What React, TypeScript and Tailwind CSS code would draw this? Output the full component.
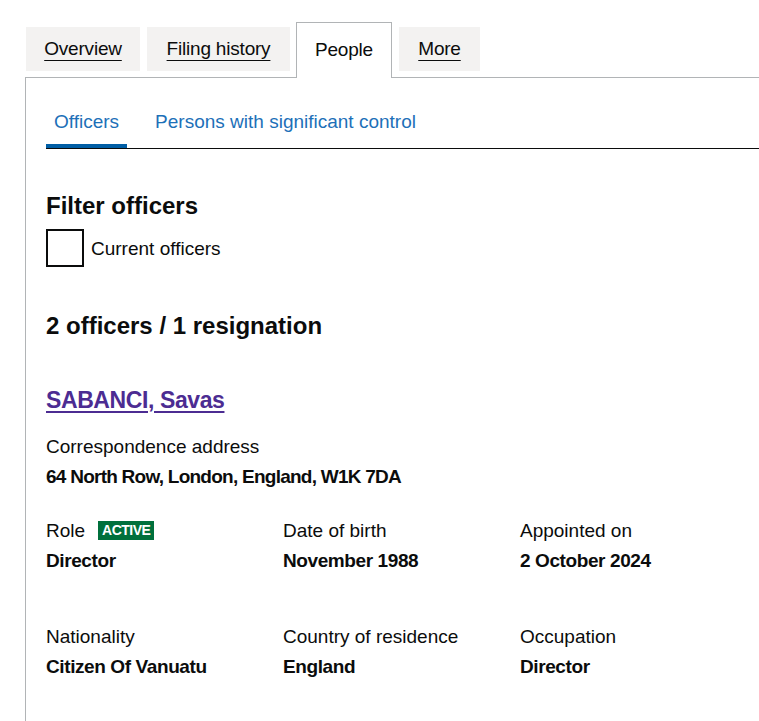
const body = { fontFamily: '"Liberation Sans", Arial, sans-serif' };

const tabs = [
  { label: "Overview", active: false, cls: "w-[114px] mr-[7px]" },
  { label: "Filing history", active: false, cls: "w-[143px] mr-[6px]" },
  { label: "People", active: true, cls: "w-[96px] mr-[7px]" },
  { label: "More", active: false, cls: "w-[81px]" },
];

function Field({ label, value, badge }: { label: string; value: string; badge?: string }) {
  return (
    <div>
      <div className="flex items-center text-[19px] leading-[25px]">
        <span>{label}</span>
        {badge && (
          <span className="ml-[13px] bg-[#00703c] px-[4px] text-[14px] font-bold leading-[19px] tracking-[-0.5px] text-white">
            {badge}
          </span>
        )}
      </div>
      <div className="mt-[5px] text-[19px] font-bold leading-[25px] tracking-[-0.4px]">{value}</div>
    </div>
  );
}

export default function App() {
  return (
    <div className="min-h-screen bg-white text-[#0b0c0c]" style={body}>
      <div className="pt-[22px] pl-[25px]">
        <ul className="flex items-start border-b border-[#b1b4b6] pl-[1px]">
          {tabs.map((t) =>
            t.active ? (
              <li
                key={t.label}
                className={`${t.cls} -mb-px border border-b-0 border-[#b1b4b6] bg-white pt-[14px] pb-[16px] text-center text-[19px] leading-[25px] tracking-[-0.2px]`}
              >
                {t.label}
              </li>
            ) : (
              <li
                key={t.label}
                className={`${t.cls} mt-[5px] bg-[#f3f2f1] py-[10px] text-center text-[19px] leading-[24px] tracking-[-0.2px]`}
              >
                <span className="underline decoration-1 underline-offset-[5px]">{t.label}</span>
              </li>
            ),
          )}
        </ul>

        <div className="min-h-[644px] border-l border-[#b1b4b6] pt-[31px] pl-[20px]">
          <div className="flex border-b border-[#0b0c0c]">
            <div className="border-b-4 border-[#005ea5] px-[8px] pb-[10px] text-[19px] leading-[25px] text-[#1d70b8]">
              Officers
            </div>
            <div className="ml-[28px] pb-[14px] text-[19px] leading-[25px] text-[#1d70b8]">
              Persons with significant control
            </div>
          </div>

          <h2 className="mt-[43px] text-[24px] font-bold leading-[28px]">Filter officers</h2>
          <label className="mt-[9px] flex items-center gap-[7px]">
            <span className="h-[38px] w-[38px] border-2 border-[#0b0c0c]" />
            <span className="text-[19px] leading-[25px]">Current officers</span>
          </label>

          <h2 className="mt-[45px] text-[24px] font-bold leading-[28px]">2 officers / 1 resignation</h2>

          <h3 className="mt-[46px] text-[23px] font-bold leading-[28px] tracking-[-0.4px]">
            <a href="#" className="text-[#4c2c92] underline decoration-2 underline-offset-[3px]">
              SABANCI, Savas
            </a>
          </h3>

          <div className="mt-[20px] text-[19px] leading-[25px]">Correspondence address</div>
          <div className="mt-[5px] text-[19px] font-bold leading-[25px] tracking-[-0.75px]">
            64 North Row, London, England, W1K 7DA
          </div>

          <div className="mt-[29px] grid grid-cols-[237px_237px_237px] gap-y-[51px]">
            <Field label="Role" value="Director" badge="ACTIVE" />
            <Field label="Date of birth" value="November 1988" />
            <Field label="Appointed on" value="2 October 2024" />
            <Field label="Nationality" value="Citizen Of Vanuatu" />
            <Field label="Country of residence" value="England" />
            <Field label="Occupation" value="Director" />
          </div>
        </div>
      </div>
    </div>
  );
}
